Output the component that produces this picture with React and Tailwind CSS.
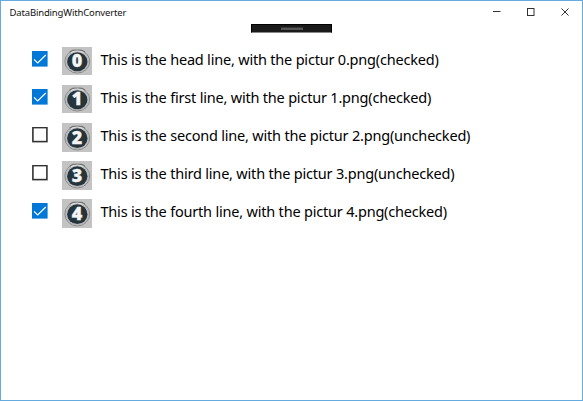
import React from 'react';

const items = [
  { n: 0, checked: true, text: 'This is the head line, with the pictur 0.png(checked)' },
  { n: 1, checked: true, text: 'This is the first line, with the pictur 1.png(checked)' },
  { n: 2, checked: false, text: 'This is the second line, with the pictur 2.png(unchecked)' },
  { n: 3, checked: false, text: 'This is the third line, with the pictur 3.png(unchecked)' },
  { n: 4, checked: true, text: 'This is the fourth line, with the pictur 4.png(checked)' },
];

function CheckBox({ checked }) {
  return (
    <svg viewBox="0 0 16 16" className="block size-4 shrink-0" fill="none">
      {checked ? (
        <>
          <rect width="15.6" height="15.6" fill="#0078d7" />
          <path d="M2 8.3 L5.7 12 L13.8 4" stroke="#fff" strokeWidth="1.2" />
        </>
      ) : (
        <rect x="0.9" y="0.6" width="14" height="14" fill="#fff" stroke="#333" strokeWidth="1.6" />
      )}
    </svg>
  );
}

function Badge({ n }) {
  return (
    <svg viewBox="0 0 30 30" preserveAspectRatio="none" className={n < 2 ? 'block h-[28px] w-[30px]' : 'mt-[2px] block h-[29px] w-[30px] shrink-0'}>
      <rect width="30" height="30" fill="#c3c3c3" />
      <circle cx="15.3" cy="15.5" r="12.4" fill="#d0d0d0" stroke="#858585" strokeWidth="1" />
      <circle cx="15.3" cy="15.5" r="11.2" fill="#c7cacb" stroke="#999" strokeWidth="0.5" />
      <circle cx="15.3" cy="15.7" r="10.2" fill="#26343c" />
      <path d="M7.5 5.2 Q11 2.4 14 3.5 Q15.3 4.8 16.7 3.5 Q20 2.4 23 5.2" fill="none" stroke="#6c6c6c" strokeWidth="1" />
      <path d="M9 6 Q15 2.4 21.5 6" fill="none" stroke="#eee" strokeWidth="0.8" />
      <text x="15" y="21.9" textAnchor="middle" fill="#f5f5f5" stroke="#f5f5f5" strokeWidth="0.3" className="font-['Open_Sans',sans-serif] text-[18px] font-extrabold">{n}</text>
    </svg>
  );
}

function Header() {
  return (
    <header className="flex h-[23px] items-center justify-between pl-[8.5px] pr-[12px]">
      <span className="whitespace-nowrap text-[9.5px] leading-none tracking-[-0.16px] text-[#111]">DataBindingWithConverter</span>
      <svg viewBox="0 0 80 12" className="mb-[1px] h-3 w-20" fill="none" stroke="#333" strokeWidth="1">
        <path d="M3 5.5 H10.5" />
        <rect x="37.5" y="2.5" width="6.5" height="7" />
        <path d="M71.5 2.5 L78.5 9.5 M78.5 2.5 L71.5 9.5" />
      </svg>
    </header>
  );
}

export default function App() {
  return (
    <div className="flex h-[401px] w-[583px] flex-col overflow-hidden border border-[#66abe0] bg-white font-['Noto_Sans',sans-serif] text-black">
      <Header />
      <div className="ml-[250px] flex h-[9px] w-[81px] shrink-0 justify-center border border-b-[#888] border-black bg-[#1a1a1a] pt-[2px]">
        <div className="h-[3px] w-[22px] border-t border-[#333] bg-[#555]" />
      </div>
      <main className="flex flex-col pt-[7px]">
        {items.map((item) => (
          <div key={item.n} className="flex h-[38px] items-center pl-[31px]">
            <CheckBox checked={item.checked} />
            <div className="ml-[14.4px] flex h-[30px] shrink-0 items-center pt-[3px]">
              <Badge n={item.n} />
            </div>
            <span className="ml-[8.1px] whitespace-nowrap text-[14.5px] leading-5 tracking-[-0.2px]">{item.text}</span>
          </div>
        ))}
      </main>
    </div>
  );
}
